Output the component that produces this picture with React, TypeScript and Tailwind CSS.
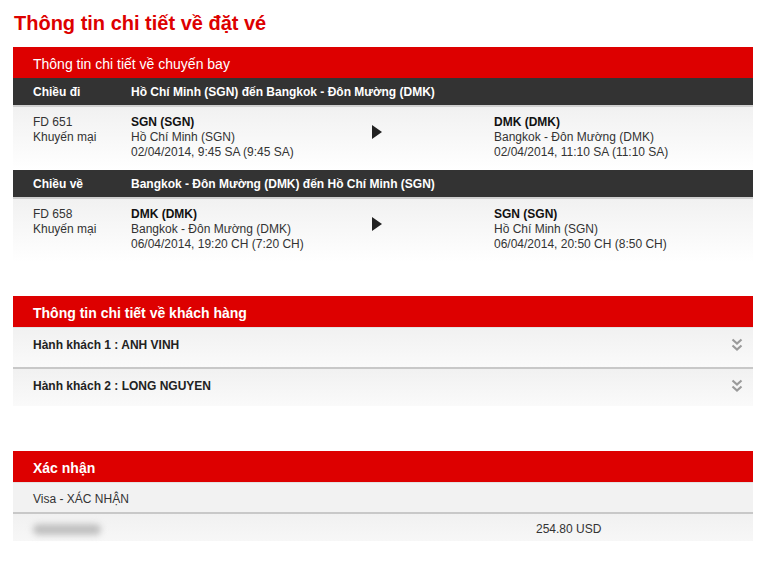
import { FC } from "react";

const font = { fontFamily: '"Liberation Sans", Arial, sans-serif' };

const Arrow: FC = () => (
  <svg width="10" height="14" viewBox="0 0 10 14" className="block">
    <path d="M0 0 L10 7 L0 14 Z" fill="#222" />
  </svg>
);

const DoubleChevron: FC = () => (
  <svg width="12" height="14" viewBox="0 0 12 14" className="block">
    <path
      d="M1.5 1.5 L6 5.5 L10.5 1.5 M1.5 7.5 L6 11.5 L10.5 7.5"
      fill="none"
      stroke="#9a9a9a"
      strokeWidth="2.2"
    />
  </svg>
);

interface Leg {
  label: string;
  route: string;
  flight: string;
  from: [string, string, string];
  to: [string, string, string];
}

const legs: Leg[] = [
  {
    label: "Chiều đi",
    route: "Hồ Chí Minh (SGN) đến Bangkok - Đôn Mường (DMK)",
    flight: "FD 651",
    from: ["SGN (SGN)", "Hồ Chí Minh (SGN)", "02/04/2014, 9:45 SA (9:45 SA)"],
    to: ["DMK (DMK)", "Bangkok - Đôn Mường (DMK)", "02/04/2014, 11:10 SA (11:10 SA)"],
  },
  {
    label: "Chiều về",
    route: "Bangkok - Đôn Mường (DMK) đến Hồ Chí Minh (SGN)",
    flight: "FD 658",
    from: ["DMK (DMK)", "Bangkok - Đôn Mường (DMK)", "06/04/2014, 19:20 CH (7:20 CH)"],
    to: ["SGN (SGN)", "Hồ Chí Minh (SGN)", "06/04/2014, 20:50 CH (8:50 CH)"],
  },
];

const SectionHeader: FC<{ title: string; bold?: boolean }> = ({ title, bold }) => (
  <div
    className={`h-[31px] bg-[#dd0000] pl-[20px] pt-[4px] flex items-center text-white text-[14px] ${
      bold ? "font-bold" : ""
    }`}
  >
    {title}
  </div>
);

const Stop: FC<{ lines: [string, string, string] }> = ({ lines }) => (
  <div>
    <div className="font-bold text-[#111]">{lines[0]}</div>
    <div>{lines[1]}</div>
    <div>{lines[2]}</div>
  </div>
);

export default function App() {
  return (
    <div className="w-[766px] h-[562px] bg-white px-[13px] pt-[11px]" style={font}>
      <h1 className="text-[20px] leading-[24px] font-bold text-[#dd0000] pl-[1px] mb-[12px]">
        Thông tin chi tiết về đặt vé
      </h1>

      <section className="mb-[34px]">
        <SectionHeader title="Thông tin chi tiết về chuyến bay" />
        {legs.map((leg) => (
          <div key={leg.flight}>
            <div className="h-[27px] bg-[#333333] text-white text-[12px] font-bold flex items-center pl-[20px]">
              <span className="w-[98px]">{leg.label}</span>
              <span>{leg.route}</span>
            </div>
            <div className="border-t-2 border-[#d0d0d0] bg-gradient-to-b from-[#f1f1f1] to-white pt-[8px] pb-[10px] pl-[20px] text-[12px] leading-[15px] text-[#333] grid grid-cols-[98px_241px_122px_1fr]">
              <div>
                <div>{leg.flight}</div>
                <div>Khuyến mại</div>
              </div>
              <Stop lines={leg.from} />
              <div className="pt-[10px]">
                <Arrow />
              </div>
              <Stop lines={leg.to} />
            </div>
          </div>
        ))}
      </section>

      <section className="mb-[45px]">
        <SectionHeader title="Thông tin chi tiết về khách hàng" bold />
        <div className="border-t border-[#e2e2e2]">
          {["Hành khách 1 : ANH VINH", "Hành khách 2 : LONG NGUYEN"].map((p, i) => (
            <div
              key={p}
              className={`h-[39px] bg-gradient-to-b from-[#f1f1f1] to-[#fafafa] pl-[20px] pr-[10px] pt-[10px] flex justify-between text-[12px] leading-[15px] font-bold text-[#222] ${
                i > 0 ? "border-t-2 border-[#c8c8c8] h-[38px] pt-[8px]" : ""
              }`}
            >
              <span>{p}</span>
              <DoubleChevron />
            </div>
          ))}
        </div>
      </section>

      <section>
        <SectionHeader title="Xác nhận" bold />
        <div className="border-t border-[#e2e2e2] h-[30px] bg-[#f2f2f2] pl-[20px] pt-[3px] flex items-center text-[12px] text-[#333]">
          Visa - XÁC NHẬN
        </div>
        <div className="border-t-2 border-[#c8c8c8] h-[29px] bg-gradient-to-b from-[#f1f1f1] to-[#f7f7f7] pl-[20px] pt-[3px] flex items-center text-[12px] text-[#333]">
          <div className="w-[503px]">
            <div className="w-[68px] h-[11px] rounded-full bg-[#c0c0c0] blur-[3px]" />
          </div>
          <span>254.80 USD</span>
        </div>
      </section>
    </div>
  );
}
